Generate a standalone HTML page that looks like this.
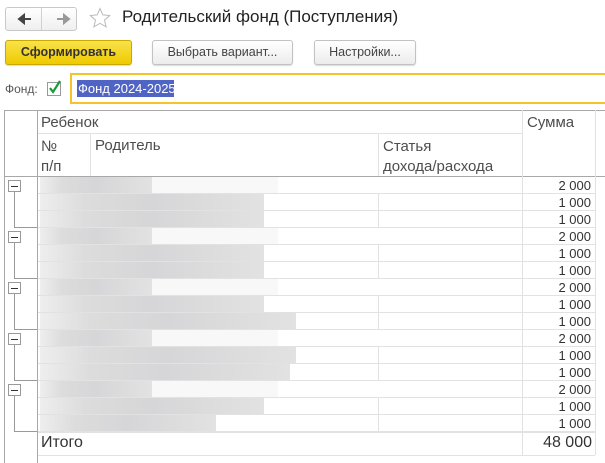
<!DOCTYPE html>
<html><head><meta charset="utf-8"><style>
*{margin:0;padding:0;box-sizing:border-box}
body{width:605px;height:463px;overflow:hidden;background:#fff;font-family:"Liberation Sans",Arial,sans-serif;color:#333;position:relative}
.a{position:absolute}
.btn{position:absolute;height:25px;border:1px solid #c2c2c2;border-radius:3px;background:linear-gradient(#fff,#ececec);font-size:12.5px;line-height:23px;text-align:center;color:#444;box-shadow:0 1px 1px rgba(0,0,0,.15)}
.h{position:absolute;height:1px;background:#e2e2e2}
.v{position:absolute;width:1px;background:#e2e2e2}
.t{position:absolute;font-size:15px;color:#4d4d4d}
.n{position:absolute;right:14px;font-size:13px;color:#333;text-align:right}
.b{position:absolute;height:17px}
</style></head><body>
<div class="a" style="left:5px;top:7px;width:72px;height:24px;border:1px solid #c8c8c8;border-radius:3px;background:linear-gradient(#fff,#efefef)"></div>
<div class="a" style="left:41px;top:8px;width:1px;height:22px;background:#d0d0d0"></div>
<svg class="a" style="left:15px;top:12px" width="60" height="14"><path d="M4 7h12M4 7l5-4v8z" stroke="#444" stroke-width="2" fill="#444"/><path d="M42 7h12M54 7l-5-4v8z" stroke="#999" stroke-width="2" fill="#999"/></svg>
<svg class="a" style="left:89px;top:7px" width="22" height="22"><path d="M11 1.5l2.8 6.4 6.9.6-5.2 4.6 1.6 6.8L11 16.3l-6.1 3.6 1.6-6.8L1.3 8.5l6.9-.6z" fill="none" stroke="#bbb" stroke-width="1"/></svg>
<div class="a" style="left:122px;top:7px;font-size:17px;color:#222">Родительский фонд (Поступления)</div>
<div class="btn" style="left:5px;top:40px;width:127px;background:linear-gradient(#f9e24a,#efcb00);border-color:#c9a800;font-weight:bold;color:#333">Сформировать</div>
<div class="btn" style="left:152px;top:40px;width:141px">Выбрать вариант...</div>
<div class="btn" style="left:314px;top:40px;width:102px">Настройки...</div>
<div class="a" style="left:5px;top:82px;font-size:12px;color:#555">Фонд:</div>
<div class="a" style="left:47px;top:82px;width:14px;height:14px;border:1px solid #999;background:#fff"></div>
<svg class="a" style="left:47px;top:79px" width="16" height="16"><path d="M3 9l3 4 7-11" stroke="#1a9a3a" stroke-width="2.2" fill="none"/></svg>
<div class="a" style="left:70px;top:73px;width:540px;height:31px;border:2px solid #f3c52b"></div>
<div class="a" style="left:77px;top:80px;width:97px;height:17px;background:#4f64c4"></div>
<div class="a" style="left:78px;top:81px;font-size:13px;color:#fff">Фонд 2024-2025</div>
<div class="a" style="left:4px;top:110px;width:601px;height:1px;background:#a8a8a8"></div>
<div class="a" style="left:4px;top:110px;width:1px;height:353px;background:#a8a8a8"></div>
<div class="a" style="left:37px;top:110px;width:1px;height:353px;background:#a8a8a8"></div>
<div class="a" style="left:4px;top:176px;width:601px;height:1px;background:#a8a8a8"></div>
<div class="v" style="left:522px;top:110px;height:345px"></div>
<div class="v" style="left:595px;top:110px;height:345px"></div>
<div class="h" style="left:38px;top:133px;width:484px"></div>
<div class="v" style="left:90px;top:133px;height:43px"></div>
<div class="v" style="left:378px;top:133px;height:43px"></div>
<div class="t" style="left:41px;top:114px">Ребенок</div>
<div class="t" style="left:527px;top:114px">Сумма</div>
<div class="t" style="left:41px;top:137px;line-height:20px">№<br>п/п</div>
<div class="t" style="left:95px;top:137px">Родитель</div>
<div class="t" style="left:383px;top:137px;line-height:20px">Статья<br>дохода/расхода</div>
<div id="rows"></div>
<div class="h" style="left:38px;top:432px;width:557px"></div>
<div class="t" style="left:41px;top:434px;font-size:16px;color:#333">Итого</div>
<div class="a" style="right:13px;top:434px;font-size:16px;color:#333">48 000</div>
<div class="v" style="left:522px;top:432px;height:23px"></div>
<div class="h" style="left:38px;top:455px;width:557px"></div>
<script>
(function(){
var h='';
var childW=[[224,224],[224,224],[224,256],[256,250],[224,176]];
for(var g=0;g<5;g++){
 var ty=177+51*g;
 for(var r=0;r<3;r++){
  var y=ty+r*17;
  if(r>0) h+='<div class="v" style="left:378px;top:'+y+'px;height:17px"></div>';
  h+='<div class="v" style="left:522px;top:'+y+'px;height:17px"></div>';
  var w=r==0?112:childW[g][r-1];
  h+='<div class="b" style="left:40px;top:'+y+'px;width:'+w+'px;background:linear-gradient(90deg,#eeeeee,#dcdcdc 20%,#d6d6d8 50%,#e2e2e2)"></div>';
  if(r==0) h+='<div class="b" style="left:152px;top:'+y+'px;width:126px;background:#f8f8f8"></div>';
  h+='<div class="h" style="left:38px;top:'+(y+16)+'px;width:557px"></div>';
  h+='<div class="n" style="top:'+(y+1)+'px">'+(r==0?'2 000':'1 000')+'</div>';
 }
 h+='<div class="a" style="left:8px;top:'+(ty+3)+'px;width:13px;height:12px;border:1px solid #999;background:#fff"></div>';
 h+='<div class="a" style="left:11px;top:'+(ty+9)+'px;width:7px;height:1px;background:#333"></div>';
 h+='<div class="a" style="left:14px;top:'+(ty+15)+'px;width:1px;height:35px;background:#999"></div>';
 h+='<div class="a" style="left:14px;top:'+(ty+50)+'px;width:23px;height:1px;background:#999"></div>';
}
document.getElementById('rows').innerHTML=h;
})();
</script>
</body></html>
